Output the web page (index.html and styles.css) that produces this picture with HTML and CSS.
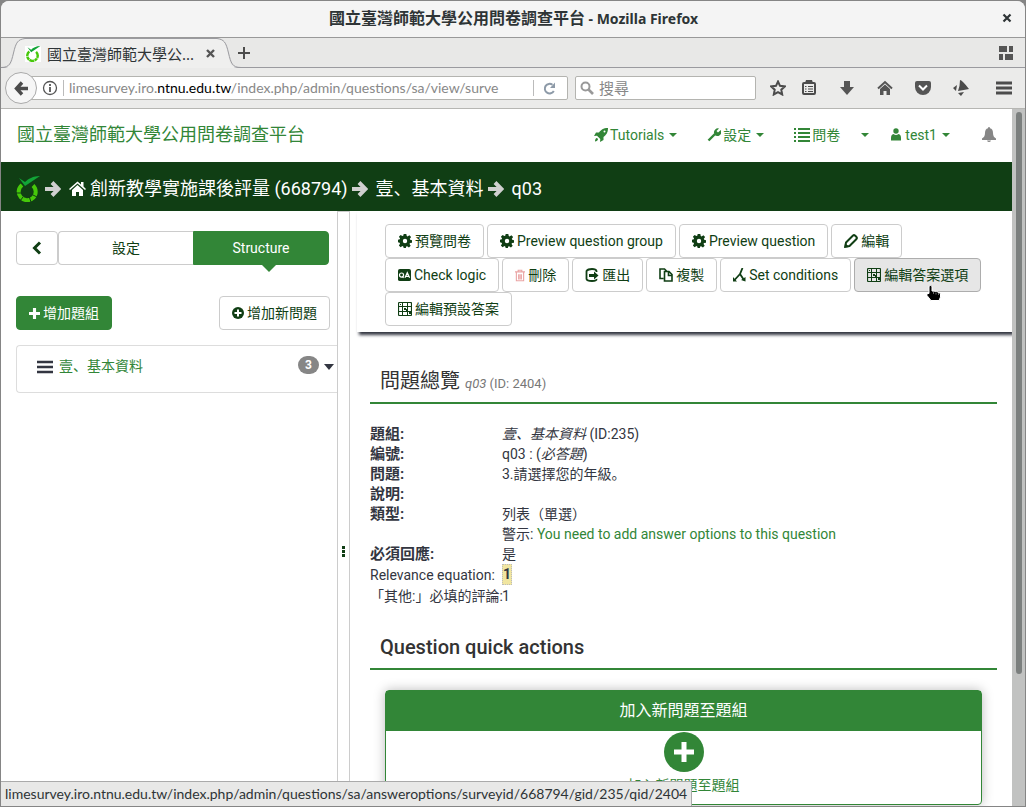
FILE: index.html
```html
<!DOCTYPE html>
<html lang="zh">
<head>
<meta charset="utf-8">
<title>國立臺灣師範大學公用問卷調查平台</title>
<link rel="stylesheet" href="styles.css">
</head>
<body>
<svg class="defs" width="0" height="0" aria-hidden="true">
  <symbol id="lime" viewBox="0 0 24 26">
    <path d="M6 9A8.500 8.500 0 1 0 17 9.500" fill="none" stroke="#46c80a" stroke-width="4"/>
    <path d="M5 17H0M7 21l-3 4M13 20l2 6M15 18l6 3" class="lime-cut"/>
    <path d="M3 2l6 8L24 0C17 0 12 3 9 6z" fill="#12a537"/>
  </symbol>
  <symbol id="arrow" viewBox="0 0 16 16"><path d="M0 8h13M7 1.500L13.500 8 7 14.500" fill="none" stroke="currentColor" stroke-width="4"/></symbol>
  <symbol id="gear" viewBox="0 0 16 16"><path fill="currentColor" fill-rule="evenodd" d="M6.500 0h3l.5 2.400 1 .4L13 1.500 15 3.500 13.500 5.500l.4 1L16 7v3l-2.300.4-.5 1L14.500 13.500l-2 2L10.400 14l-1 .3L9 16H6.500L6 14.200 5 13.800 3 15 1 13l1.300-2-.5-1L0 9.500v-3L2 6l.4-1L1 3l2-2 2 1.400 1-.4zM8 5.500a2.500 2.500 0 1 0 0 5 2.500 2.500 0 0 0 0-5z"/></symbol>
  <symbol id="grid" viewBox="0 0 14 14"><rect x=".5" y=".5" width="13" height="13" rx="1" fill="none" stroke="currentColor" stroke-width="1.200"/><path d="M4.500 1v12M9.500 1v12M1 4.500h12M1 9.500h12" stroke="currentColor"/><path d="M6 6h2v1h2v3h3v2h-2v-2H8V8H6zM2 2h1v1H2z" fill="currentColor"/></symbol>
  <symbol id="caret" viewBox="0 0 8 4"><path d="M0 0h8L4 4z" fill="currentColor"/></symbol>
</svg>
<div class="window">
  <header class="titlebar">
    <div class="window-title">國立臺灣師範大學公用問卷調查平台<span class="app-name"> - Mozilla Firefox</span></div>
    <button class="plain close-window" aria-label="Close window"><svg width="10" height="10" viewBox="0 0 10 10"><path d="M1.500 1.500l7 7M8.500 1.500l-7 7" stroke="#2e3436" stroke-width="2.200"/></svg></button>
  </header>
  <div class="tabstrip">
    <div class="tab">
      <svg class="tab-edge" width="24" height="30" viewBox="0 0 24 30"><path d="M0 30C11 30 11 26 13 15 15 4 18 1 24 1V30z" fill="#efefee"/><path d="M0 29.500C9 29.500 10 25 12.500 15 15 4 17 1.500 24 .500" fill="none" stroke="#9a9a9f"/></svg>
      <div class="tab-body">
        <svg class="favicon" width="16" height="16"><use href="#lime"/></svg>
        <span class="tab-title">國立臺灣師範大學公...</span>
        <button class="plain" aria-label="Close tab"><svg width="9" height="9" viewBox="0 0 9 9"><path d="M1 1l7 7M8 1L1 8" stroke="#555" stroke-width="2.400"/></svg></button>
      </div>
      <svg class="tab-edge" width="24" height="30" viewBox="0 0 24 30"><path d="M24 30C13 30 13 26 11 15 9 4 6 1 0 1V30z" fill="#efefee"/><path d="M24 29.500C15 29.500 14 25 11.500 15 9 4 7 1.500 0 .500" fill="none" stroke="#9a9a9f"/></svg>
    </div>
    <button class="plain" aria-label="New tab"><svg width="12" height="12" viewBox="0 0 12 12"><path d="M6 0v12M0 6h12" stroke="#4c4c4c" stroke-width="2"/></svg></button>
    <button class="plain tab-groups" aria-label="Tab groups"><svg width="14" height="14" viewBox="0 0 14 14"><path d="M0 0h8v6H0zM10 0h4v6h-4zM0 8h4v6H0zM6 8h8v6H6z" fill="#555"/></svg></button>
  </div>
  <div class="navbar">
    <button class="back" aria-label="Back"><svg width="15" height="15" viewBox="0 0 15 15"><path d="M14 7.500H3M8 1.500L2.500 7.500 8 13.500" fill="none" stroke="#4c4c4c" stroke-width="3.400"/></svg></button>
    <div class="urlbar">
      <svg width="16" height="16" viewBox="0 0 16 16"><circle cx="8" cy="8" r="6.500" fill="none" stroke="#555" stroke-width="1.300"/><path d="M8 7v5M8 4v2" stroke="#555" stroke-width="1.800"/></svg>
      <span class="bar-sep"></span>
      <div class="url" role="textbox" contenteditable="true" spellcheck="false" aria-label="Address">limesurvey.iro.<b>ntnu.edu.tw</b>/index.php/admin/questions/sa/view/surve</div>
      <span class="bar-sep"></span>
      <button class="plain reload" aria-label="Reload"><svg width="13" height="13" viewBox="0 0 13 13"><path d="M10.800 9A4.800 4.800 0 1 1 9.500 2.800" fill="none" stroke="#8d9aa8" stroke-width="2"/><path d="M7 6h5V.5z" fill="#8d9aa8"/></svg></button>
    </div>
    <label class="search"><svg width="14" height="14" viewBox="0 0 14 14"><circle cx="5.500" cy="5.500" r="4" fill="none" stroke="#999" stroke-width="2"/><path d="M8.500 8.500l4.500 4.500" stroke="#999" stroke-width="2.600"/></svg><input type="search" aria-label="搜尋" placeholder="搜尋"></label>
    <div class="tools">
      <button class="plain" aria-label="Bookmark"><svg width="16" height="16" viewBox="0 0 16 16"><path d="M8 1.500l2 4.300 4.800.6-3.500 3.300.9 4.800L8 12.200l-4.200 2.300.9-4.800L1.200 6.400 6 5.800z" fill="none" stroke="#4c4c4c" stroke-width="2"/></svg></button>
      <button class="plain" aria-label="Bookmarks list"><svg width="16" height="16" viewBox="0 0 16 16"><rect x="2" y="3" width="12" height="11" rx="1" fill="none" stroke="#4c4c4c" stroke-width="2"/><path d="M4 3l1-3h6l1 3z" fill="#4c4c4c"/><path d="M4 6.500h1.500M7 6.500h5M4 9h1.500M7 9h5M4 11.500h1.500M7 11.500h5" stroke="#4c4c4c"/></svg></button>
      <button class="plain" aria-label="Downloads"><svg width="16" height="16" viewBox="0 0 16 16"><path d="M5 1h6v6h4l-7 8-7-8h4z" fill="#555"/></svg></button>
      <button class="plain" aria-label="Home"><svg width="16" height="16" viewBox="0 0 16 16"><path d="M1 8.500L8 2l7 6.500" fill="none" stroke="#555" stroke-width="2"/><path d="M3 9l5-4.500L13 9v6H9.500v-4h-3v4H3z" fill="#555"/></svg></button>
      <button class="plain" aria-label="Pocket"><svg width="16" height="16" viewBox="0 0 16 16"><path d="M0 3q0-2 2-2h12q2 0 2 2v4a8 8 0 0 1-16 0z" fill="#555"/><path d="M4 5.500l4 4 4-4" fill="none" stroke="#fff" stroke-width="2"/></svg></button>
      <button class="plain" aria-label="Extension"><svg width="16" height="16" viewBox="0 0 16 16"><path d="M7 0q2 0 9 9-5 1-11 2 2-5 2-11zM0 8l4-3-1 6zM5 13l6-1-3 4z" fill="#4c4c4c"/></svg></button>
      <button class="plain menu" aria-label="Menu"><svg width="16" height="14" viewBox="0 0 16 14"><path d="M0 2h16M0 7h16M0 12h16" stroke="#4c4c4c" stroke-width="2.800"/></svg></button>
    </div>
  </div>
  <div class="viewport">
    <div class="page">
      <nav class="topnav">
        <a class="brand" href="#">國立臺灣師範大學公用問卷調查平台</a>
        <div class="topnav-links">
          <a href="#"><svg width="14" height="14" viewBox="0 0 14 14"><path fill="currentColor" d="M14 0C9 0 7 2 5 4.500H2L0 8l3-.3L6.300 11 6 14l3.500-2V9C12 7 14 5 14 0zM3 10c-1.500 0-2 2-2 3.500C2.500 13.500 4 12.500 4 11z"/><circle cx="10.500" cy="3.500" r="1" fill="#fff"/></svg><span>Tutorials</span><svg class="caret" width="8" height="4"><use href="#caret"/></svg></a>
          <a href="#"><svg width="14" height="14" viewBox="0 0 14 14"><path d="M1.500 12.500L8 6" stroke="currentColor" stroke-width="2.400"/><path d="M12 .5L9.500 3l1.500 1.500L13.800 2A4 4 0 0 1 7.500 6.800L7 5A4 4 0 0 1 12 .5z" fill="currentColor"/></svg><span>設定</span><svg class="caret" width="8" height="4"><use href="#caret"/></svg></a>
          <a href="#"><svg width="16" height="14" viewBox="0 0 16 14"><path d="M0 1h2M4 1h12M0 5h2M4 5h12M0 9h2M4 9h12M0 13h2M4 13h12" stroke="currentColor" stroke-width="1.800"/></svg><span>問卷</span></a>
          <a href="#" aria-label="問卷選單"><svg width="8" height="4"><use href="#caret"/></svg></a>
          <a href="#"><svg class="user" width="10" height="13" viewBox="0 0 10 13"><circle cx="5" cy="3" r="2.700" fill="currentColor"/><path d="M0 12.500V10q0-3.500 2.500-4 2.500 2 5 0 2.500.5 2.500 4v2.500z" fill="currentColor"/></svg><span>test1</span><svg class="caret" width="8" height="4"><use href="#caret"/></svg></a>
          <a class="bell" href="#" aria-label="通知"><svg width="14" height="15" viewBox="0 0 14 15"><path d="M7 0q1 0 1 1.200Q11 2 11 6q0 4 3 5.500V13H0v-1.500Q3 10 3 6q0-4 3-4.800Q6 0 7 0zM5 13.500h4Q8.500 15 7 15t-2-1.500z" fill="currentColor"/></svg></a>
        </div>
      </nav>
      <nav class="crumbs" aria-label="Breadcrumb">
        <svg width="24" height="26"><use href="#lime"/></svg>
        <svg class="sep first" width="16" height="16"><use href="#arrow"/></svg>
        <a href="#"><svg width="17" height="15" viewBox="0 0 17 15"><path d="M0 8L8.500.5 12 3.500V1h2.500v4.500L17 8l-1 1-7.500-6.500L1 9z" fill="currentColor"/><path d="M3 9l5.500-5L14 9v6h-4v-4H7v4H3z" fill="currentColor"/></svg>創新教學實施課後評量 (668794)</a>
        <svg class="sep" width="16" height="16"><use href="#arrow"/></svg>
        <a href="#">壹、基本資料</a>
        <svg class="sep" width="16" height="16"><use href="#arrow"/></svg>
        <span>q03</span>
      </nav>
      <div class="columns">
        <aside class="sidebar">
          <div class="mode-row">
            <button class="btn collapse" aria-label="收合"><svg width="10" height="14" viewBox="0 0 10 14"><path d="M8 1.500L2.500 7 8 12.500" fill="none" stroke="currentColor" stroke-width="3"/></svg></button>
            <div class="modes">
              <button class="btn">設定</button>
              <button class="btn active">Structure</button>
            </div>
          </div>
          <div class="add-row">
            <button class="btn primary"><svg width="11" height="11" viewBox="0 0 12 12"><path d="M6 0v12M0 6h12" stroke="currentColor" stroke-width="3.400"/></svg>增加題組</button>
            <button class="btn"><svg width="12" height="12" viewBox="0 0 12 12"><circle cx="6" cy="6" r="6" fill="currentColor"/><path d="M6 2.500v7M2.500 6h7" stroke="#fff" stroke-width="2"/></svg>增加新問題</button>
          </div>
          <div class="group">
            <svg width="16" height="14" viewBox="0 0 16 14"><path d="M0 2h16M0 7h16M0 12h16" stroke="#333641" stroke-width="2.600"/></svg>
            <a href="#">壹、基本資料</a>
            <span class="count">3</span>
            <button class="plain toggle" aria-label="展開"><svg width="10" height="6" viewBox="0 0 10 6"><path d="M0 0h10L5 6z" fill="#333641"/></svg></button>
          </div>
        </aside>
        <div class="splitter" role="separator" aria-orientation="vertical"><i></i><i></i><i></i></div>
        <main class="main">
          <div class="toolbar">
            <button class="btn"><svg width="14" height="14"><use href="#gear"/></svg>預覽問卷</button>
            <button class="btn"><svg width="14" height="14"><use href="#gear"/></svg>Preview question group</button>
            <button class="btn"><svg width="14" height="14"><use href="#gear"/></svg>Preview question</button>
            <button class="btn"><svg width="14" height="14" viewBox="0 0 14 14"><path d="M1.500 12.500l.5-4L9 1.500q1-.8 2 0l1.500 1.500q.8 1 0 2l-7 7z" fill="none" stroke="currentColor" stroke-width="2"/><path d="M0 14l1-5 4 4z" fill="currentColor"/></svg>編輯</button>
            <button class="btn"><svg width="13" height="13" viewBox="0 0 14 14"><rect width="14" height="13" rx="2" fill="currentColor"/><circle cx="3.800" cy="6.500" r="2.200" fill="none" stroke="#fff" stroke-width="1.300"/><path d="M4.500 8L6 9.500M7.500 9.500L10 4l2.500 5.500M8.500 8h3" fill="none" stroke="#fff" stroke-width="1.300"/></svg>Check logic</button>
            <button class="btn"><svg class="trash" width="10" height="13" viewBox="0 0 11 13"><path d="M0 2.500h11M3.500 2V.7h4V2M1.500 3v9.300h8V3M4 5v6M5.500 5v6M7 5v6" fill="none" stroke="currentColor" stroke-width="1.200"/></svg>刪除</button>
            <button class="btn"><svg width="14" height="14" viewBox="0 0 14 14"><path d="M11.500 4V3Q11 1 7 1T1.500 3v8Q2 13 7 13t4.500-2" fill="none" stroke="currentColor" stroke-width="1.800"/><path d="M4 6h5V3.500L13.500 7.500 9 11.500V9H4z" fill="currentColor"/></svg>匯出</button>
            <button class="btn"><svg width="14" height="14" viewBox="0 0 14 14"><path d="M4.500 10.500H1V1h4.500L8 3.500M5.500 3.500H10L13 6.500V13H5.500zM9.500 4v3.500H13" fill="none" stroke="currentColor" stroke-width="1.600"/></svg>複製</button>
            <button class="btn"><svg width="13" height="14" viewBox="0 0 13 14"><path d="M9.500 0L7 6l-5.500 6M7 6l4 6" fill="none" stroke="currentColor" stroke-width="1.800"/><path d="M0 13.500V9l4 4.500zM8 12l4.500-3v4.500z" fill="currentColor"/></svg>Set conditions</button>
            <button class="btn hover"><svg width="14" height="14"><use href="#grid"/></svg>編輯答案選項<svg class="pointer" width="16" height="17" viewBox="0 0 16 17"><path d="M3 1q2-1.500 3 .5V6q5-.5 8.500 2.500V12L13 15.500H5L1 10.500V8.500h2z" fill="#000" stroke="#fff"/><path d="M7.500 7v2M10 7.500v2M12.500 8v2" stroke="#999" stroke-width=".7"/></svg></button>
            <button class="btn"><svg width="14" height="14"><use href="#grid"/></svg>編輯預設答案</button>
          </div>
          <div class="content">
            <h3>問題總覽 <small><em>q03</em> (ID: 2404)</small></h3>
            <table class="summary">
              <tr><th scope="row">題組:</th><td><em>壹、基本資料</em> (ID:235)</td></tr>
              <tr><th scope="row">編號:</th><td>q03 : (<em>必答題</em>)</td></tr>
              <tr><th scope="row">問題:</th><td>3.請選擇您的年級。</td></tr>
              <tr><th scope="row">說明:</th><td></td></tr>
              <tr><th scope="row">類型:</th><td>列表（單選）</td></tr>
              <tr><th scope="row"></th><td>警示: <a href="#">You need to add answer options to this question</a></td></tr>
              <tr><th scope="row">必須回應:</th><td>是</td></tr>
              <tr class="tall"><th scope="row" class="light">Relevance equation:</th><td><mark>1</mark></td></tr>
              <tr class="tall"><th scope="row" class="light">「其他:」必填的評論:</th><td>1</td></tr>
            </table>
            <h3 class="quick">Question quick actions</h3>
            <section class="panel">
              <h4>加入新問題至題組</h4>
              <a href="#"><svg width="40" height="40" viewBox="0 0 40 40"><circle cx="20" cy="20" r="20" fill="currentColor"/><path d="M20 10v20M10 20h20" stroke="#fff" stroke-width="5"/></svg><span>加入新問題至題組</span></a>
            </section>
          </div>
        </main>
      </div>
    </div>
    <div class="scrollbar"><div class="thumb"></div></div>
    <div class="status">limesurvey.iro.ntnu.edu.tw/index.php/admin/questions/sa/answeroptions/surveyid/668794/gid/235/qid/2404</div>
  </div>
</div>
</body>
</html>
```
FILE: styles.css
```css
* { box-sizing: border-box; }
html, body { height: 100%; }
body {
  margin: 0;
  padding: 1px;
  overflow: hidden;
  background: #858585;
  color: #333641;
  font: 14px/20px Roboto, "Noto Sans CJK SC", sans-serif;
}
svg { display: block; flex: none; }
a { color: #328637; text-decoration: none; }
button, input { font: inherit; color: inherit; }
.defs { position: absolute; }
.lime-cut { fill: none; stroke: var(--lime-cut, #103e14); stroke-width: 1; }
.plain { display: flex; border: 0; padding: 0; background: none; }

.window {
  display: flex;
  flex-direction: column;
  height: 100%;
  overflow: hidden;
  border-radius: 8px 8px 0 0;
  background: #ebebea;
}
.titlebar, .tabstrip, .navbar, .status {
  flex: none;
  color: #2e3436;
  font-family: "Noto Sans", "Noto Sans CJK SC", sans-serif;
}
.titlebar {
  display: flex;
  align-items: center;
  height: 37px;
  padding: 0 13px 2px 24px;
  border-bottom: 1px solid #999;
  background: #f4f4f4;
}
.window-title { flex: 1; text-align: center; font-size: 16px; font-weight: bold; }
.app-name { font-size: 14px; }
.tabstrip {
  display: flex;
  align-items: center;
  height: 30px;
  padding-right: 12px;
  background: #e8e8e7;
  box-shadow: inset 0 -1px #9a9a9f;
}
.tab { display: flex; height: 30px; margin-right: -3px; }
.tab-body {
  display: flex;
  align-items: center;
  width: 192px;
  padding-right: 2px;
  border-top: 1px solid #9a9a9f;
  background: #efefee;
}
.tab-title { flex: 1; padding-left: 6px; font-size: 15px; white-space: nowrap; }
.favicon { --lime-cut: #fff; background: #fff; }
.tab-groups { margin-left: auto; }
.navbar {
  display: flex;
  align-items: center;
  height: 41px;
  padding: 0 13px 0 4px;
  border-bottom: 1px solid #b6b6b3;
  font-size: 15px;
}
.back {
  z-index: 1;
  display: flex;
  align-items: center;
  justify-content: center;
  width: 32px;
  height: 32px;
  margin-right: -8px;
  padding: 0;
  border: 1px solid #aaa;
  border-radius: 50%;
  background: #f6f6f6;
}
.urlbar, .search {
  display: flex;
  align-items: center;
  height: 24px;
  border: 1px solid #b4b4b0;
  border-radius: 2px;
  background: #fff;
}
.urlbar { flex: 543; min-width: 0; padding-left: 12px; }
.bar-sep { width: 1px; height: 16px; margin-left: 5px; background: #bbb; }
.url { flex: 1; overflow: hidden; margin: 0 19px 0 5px; color: #888; font-family: Lato, sans-serif; font-size: 14px; white-space: nowrap; }
.url b { color: #000; font-weight: normal; }
.reload { margin: 0 11px 0 9px; }
.search { flex: 181; min-width: 0; margin-left: 7px; padding-left: 4px; }
.search input { width: 100%; min-width: 0; padding: 0 5px; border: 0; background: none; outline: 0; }
.search input::placeholder { color: #888; opacity: 1; }
.tools { display: flex; align-items: center; gap: 22px; margin-left: 14px; }
.tools button:nth-child(2) { margin-left: -7px; }
.tools .menu { margin-left: 5px; }

.viewport { position: relative; display: flex; flex: 1; min-height: 0; overflow: hidden; background: #fff; }
.page { display: flex; flex: 1; flex-direction: column; min-width: 0; overflow: hidden; }
.scrollbar { width: 13px; padding: 3px 3px 0 4px; background: #c1c2c1; }
.thumb { height: 81%; border-radius: 3px; background: #7b7f7e; }
.status {
  position: absolute;
  z-index: 2;
  bottom: 0;
  left: 0;
  padding: 1px 4px;
  border: solid #aaa;
  border-width: 1px 1px 0 0;
  border-radius: 0 2px 0 0;
  background: #e8e8e7;
  font-family: Lato, sans-serif;
  font-size: 14px;
  line-height: 22px;
  white-space: nowrap;
}
.topnav { display: flex; flex: none; align-items: center; height: 53px; padding: 0 16px 2px; }
.brand { font-size: 18px; }
.topnav-links { display: flex; flex: 1; align-items: center; justify-content: flex-end; gap: 30px; }
.topnav-links a { display: flex; align-items: center; gap: 2px; }
.topnav-links a:nth-child(4) { margin-left: -9px; }
.topnav-links a:nth-child(5) { margin-left: -8px; }
.caret { margin-left: 3px; }
.user { margin-right: 2px; }
.topnav-links .bell { margin-left: 2px; color: #868686; }
.crumbs {
  display: flex;
  flex: none;
  align-items: center;
  height: 49px;
  padding: 4px 15px 0;
  background: #103e14;
  color: #fff;
  font-size: 18px;
}
.crumbs a { display: flex; align-items: center; gap: 4px; color: #fff; }
.sep { margin: 0 8px 0 4px; color: #d0d0d0; }
.sep.first { margin-left: 5px; }

.columns { display: grid; flex: 1; grid-template-columns: minmax(0, 336fr) 13px minmax(0, 662fr); min-height: 0; }
.sidebar { padding: 20px 0 0 15px; }
.btn {
  display: flex;
  align-items: center;
  justify-content: center;
  gap: 3px;
  height: 34px;
  padding: 0 12px;
  border: 1px solid #ccc;
  border-radius: 4px;
  background: #fff;
  color: #103e14;
  white-space: nowrap;
}
.primary, .active { border-color: #328637; background: #328637; color: #fff; }
.mode-row { display: flex; padding-right: 8px; }
.collapse { width: 42px; }
.modes { display: flex; flex: 1; }
.modes .btn { flex: 1; }
.modes .btn:first-child { border-right: 0; border-radius: 4px 0 0 4px; }
.active { position: relative; }
.modes .active { border-radius: 0 4px 4px 0; }
.active::after {
  content: "";
  position: absolute;
  top: 100%;
  left: 50%;
  border: 8px solid transparent;
  border-top-color: #328637;
}
.add-row { display: flex; justify-content: space-between; margin-top: 31px; padding-right: 7px; }
.group {
  display: flex;
  align-items: flex-start;
  height: 48px;
  margin-top: 15px;
  padding: 10px 3px 0 20px;
  border: 1px solid #ddd;
  border-right: 0;
  border-radius: 4px 0 0 4px;
}
.group > svg { margin-top: 4px; }
.group a { margin-left: 6px; }
.count {
  margin-left: auto;
  padding: 0 7px;
  border-radius: 9px;
  background: #868686;
  color: #fff;
  font-size: 12px;
  font-weight: bold;
  line-height: 18px;
}
.toggle { margin: 8px 0 0 5px; }
.splitter {
  display: flex;
  flex-direction: column;
  align-items: center;
  justify-content: center;
  gap: 1px;
  padding-top: 84px;
  border: solid #ccc;
  border-width: 1px 1px 0;
}
.splitter i { width: 3px; height: 3px; background: #103e14; }
.main { overflow: hidden; }
.toolbar {
  display: flex;
  flex-wrap: wrap;
  gap: 0 3px;
  margin-left: 7px;
  padding: 13px 24px 6px 28px;
  box-shadow: 2px 3px 3px #333641;
  clip-path: inset(0 0 -8px -2px);
}
.trash { color: #eaa4a4; }
.hover { position: relative; border-color: #adadad; background: #e6e6e6; }
.pointer { position: absolute; top: 26px; right: 38px; }
.content { padding: 0 15px 0 20px; }
h3 {
  margin: 38px 0 20px;
  padding: 0 10px 7px;
  border-bottom: 2px solid #328637;
  color: #333;
  font-size: 20px;
  font-weight: normal;
  line-height: 22px;
}
h3 small { color: #777; font-size: 13px; }
h3.quick { margin-top: 30px; padding-bottom: 10px; font-weight: 500; }
.summary { width: 100%; border-collapse: collapse; table-layout: fixed; }
.summary th, .summary td { height: 20px; padding: 0; white-space: nowrap; }
.summary th { width: 132px; font-size: 15px; font-weight: bold; text-align: left; }
.summary .tall th, .summary .tall td { height: 21px; }
.summary .light { font-size: 14px; font-weight: normal; }
mark { display: inline-block; border: 1px dotted #bbb; background: #f0e5a0; color: #333641; font-weight: bold; line-height: 19px; }
.panel {
  margin: 20px 15px 0;
  border: 1px solid #328637;
  border-radius: 4px;
  box-shadow: 0 0 12px #bbb;
}
.panel h4 { margin: 0; background: #328637; color: #fff; font-size: 16px; font-weight: normal; line-height: 40px; text-align: center; }
.panel a { display: flex; flex-direction: column; align-items: center; gap: 3px; padding: 1px 0 9px; }
```
